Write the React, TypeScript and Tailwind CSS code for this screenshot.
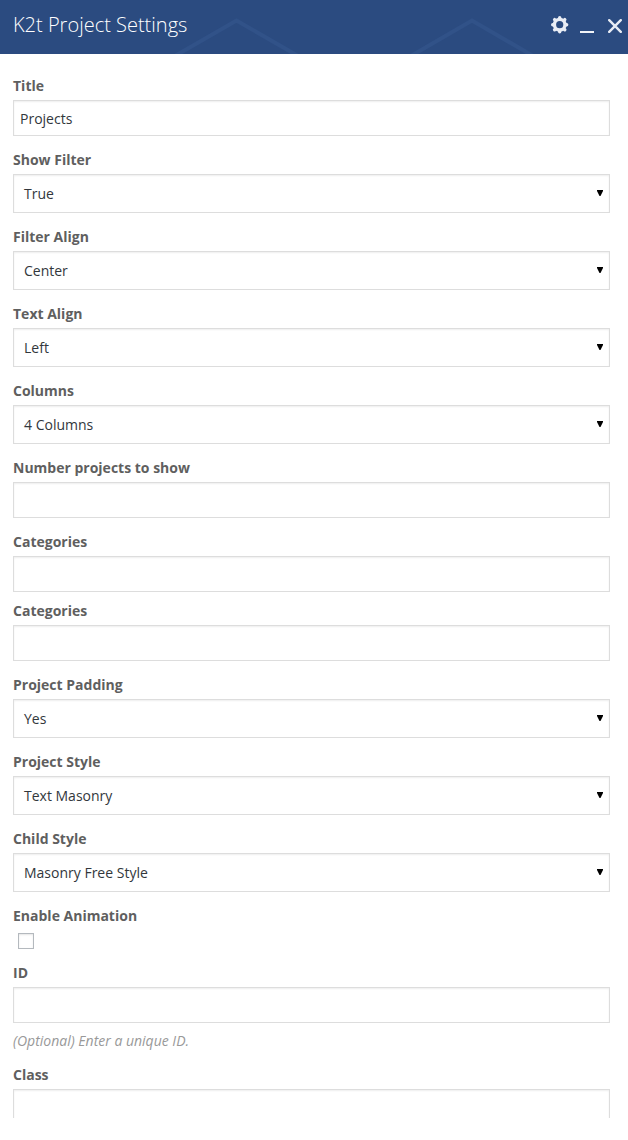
import React from "react";

type FieldProps = {
  label: string;
  value?: string;
  kind?: "text" | "select";
  gap?: string;
};

const boxBase =
  "flex items-center border border-[#dddddd] bg-white text-[14px] text-[#32373c] shadow-[inset_0_1px_2px_rgba(0,0,0,0.07)]";

function Label({ children }: { children: React.ReactNode }) {
  return <div className="h-5 text-[14px] leading-5 font-bold text-[#5f5f5f]">{children}</div>;
}

function Field({ label, value = "", kind = "text", gap = "mb-[14px]" }: FieldProps) {
  return (
    <div className={gap}>
      <Label>{label}</Label>
      {kind === "select" ? (
        <div className={`${boxBase} mt-1 h-[39px] justify-between pr-[6px] pl-[10px]`}>
          <span>{value}</span>
          <svg className="mb-px h-[6px] w-[6px]" viewBox="0 0 6 6" fill="#000">
            <path d="M0 0h6v1L3.500 6h-1L0 1z" />
          </svg>
        </div>
      ) : (
        <div className={`${boxBase} mt-1 h-9 px-[6px]`}>{value}</div>
      )}
    </div>
  );
}

function GearIcon() {
  return (
    <svg className="h-[18px] w-[18px]" viewBox="0 0 18 18" fill="none">
      <circle cx="8.700" cy="8.700" r="5.300" stroke="#e9edf5" strokeWidth="3.4" />
      <g stroke="#e9edf5" strokeWidth="3.4" strokeLinecap="round">
        <path d="M8.700 1.700v1M8.700 14.700v1M1.700 8.700h1M14.700 8.700h1M3.600 3.600l.7.700M13.100 13.100l.7.700M13.800 3.600l-.7.700M4.300 13.100l-.7.700" />
      </g>
    </svg>
  );
}

function Header() {
  return (
    <header className="relative flex h-[54px] items-start justify-between bg-[#2b4b80] pl-[13px]">
      <svg className="absolute inset-0 h-[54px] w-[628px]" viewBox="0 0 628 54" fill="none" stroke="#315288" strokeWidth="4">
        <path d="M174 56.500L236.500 20.500L299 56.500M410 56.500L472 20.500L534 56.500" />
      </svg>
      <h1 className="relative mt-[11px] text-[20px] leading-7 font-light text-white">K2t Project Settings</h1>
      <div className="relative mt-[16px] flex h-[18px] items-start pr-[6px]">
        <GearIcon />
        <span className="mt-[15px] ml-[11px] h-[2px] w-[14px] bg-[#f1f4f8]" />
        <svg className="mt-[3px] ml-[14px] h-[14px] w-[14px]" viewBox="0 0 14 14" fill="none" stroke="#e9edf5" strokeWidth="2.4" strokeLinecap="round">
          <path d="M1.200 1.200l11.600 11.600M12.800 1.200L1.200 12.800" />
        </svg>
      </div>
    </header>
  );
}

export default function App() {
  return (
    <div className="h-[1140px] w-[628px] overflow-hidden bg-white font-['Open_Sans',sans-serif]">
      <Header />
      <main className="h-[1064px] overflow-hidden pt-[22px] pr-[18px] pl-[13px]">
        <Field label="Title" value="Projects" />
        <Field label="Show Filter" value="True" kind="select" />
        <Field label="Filter Align" value="Center" kind="select" />
        <Field label="Text Align" value="Left" kind="select" />
        <Field label="Columns" value="4 Columns" kind="select" />
        <Field label="Number projects to show" />
        <Field label="Categories" gap="mb-[9px]" />
        <Field label="Categories" />
        <Field label="Project Padding" value="Yes" kind="select" />
        <Field label="Project Style" value="Text Masonry" kind="select" />
        <Field label="Child Style" value="Masonry Free Style" kind="select" />
        <div className="mb-[14px]">
          <Label>Enable Animation</Label>
          <div className="mt-[7px] ml-[5px] h-4 w-4 border border-[#b4b9be] bg-white shadow-[inset_0_1px_2px_rgba(0,0,0,0.1)]" />
        </div>
        <Field label="ID" gap="mb-2" />
        <p className="mb-[14px] h-5 text-[14px] leading-5 text-[#999999] italic">(Optional) Enter a unique ID.</p>
        <Field label="Class" />
      </main>
    </div>
  );
}
